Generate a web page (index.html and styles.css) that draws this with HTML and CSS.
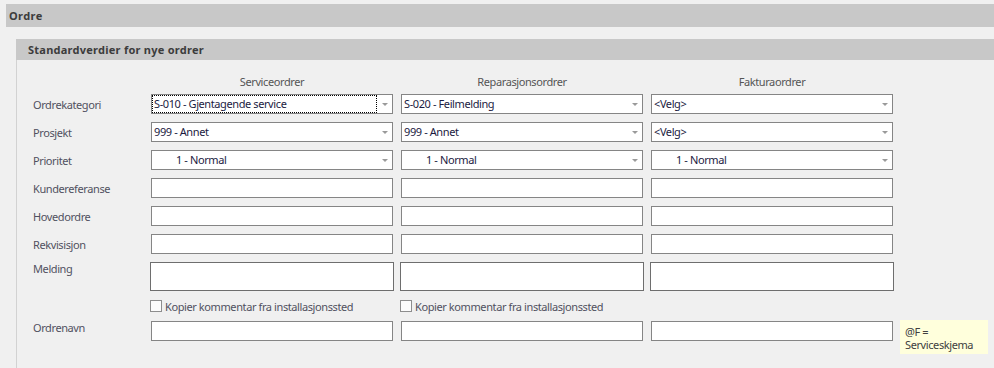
FILE: index.html
```html
<!DOCTYPE html>
<html lang="no">
<head>
    <meta charset="UTF-8">
    <title>Ordre</title>
    <link rel="stylesheet" href="styles.css">
</head>
<body>
    <div class="page-header">Ordre</div>

    <div class="section">
        <div class="section-header">Standardverdier for nye ordrer</div>

        <div class="form">
            <!-- column headings -->
            <div></div>
            <div class="col-heading">Serviceordrer</div>
            <div class="col-heading">Reparasjonsordrer</div>
            <div class="col-heading">Fakturaordrer</div>
            <div></div>

            <div class="label">Ordrekategori</div>
            <div class="combo"><span class="combo-value focused">S-010 - Gjentagende service</span><span class="combo-arrow"></span></div>
            <div class="combo"><span class="combo-value">S-020 - Feilmelding</span><span class="combo-arrow"></span></div>
            <div class="combo"><span class="combo-value">&lt;Velg&gt;</span><span class="combo-arrow"></span></div>
            <div></div>

            <div class="label">Prosjekt</div>
            <div class="combo"><span class="combo-value">999 - Annet</span><span class="combo-arrow"></span></div>
            <div class="combo"><span class="combo-value">999 - Annet</span><span class="combo-arrow"></span></div>
            <div class="combo"><span class="combo-value">&lt;Velg&gt;</span><span class="combo-arrow"></span></div>
            <div></div>

            <div class="label">Prioritet</div>
            <div class="combo"><span class="combo-value indent">1 - Normal</span><span class="combo-arrow"></span></div>
            <div class="combo"><span class="combo-value indent">1 - Normal</span><span class="combo-arrow"></span></div>
            <div class="combo"><span class="combo-value indent">1 - Normal</span><span class="combo-arrow"></span></div>
            <div></div>

            <div class="label">Kundereferanse</div>
            <div class="textbox"></div>
            <div class="textbox"></div>
            <div class="textbox"></div>
            <div></div>

            <div class="label">Hovedordre</div>
            <div class="textbox"></div>
            <div class="textbox"></div>
            <div class="textbox"></div>
            <div></div>

            <div class="label">Rekvisisjon</div>
            <div class="textbox"></div>
            <div class="textbox"></div>
            <div class="textbox"></div>
            <div></div>

            <div class="label top">Melding</div>
            <div class="memo"></div>
            <div class="memo"></div>
            <div class="memo"></div>
            <div></div>

            <div></div>
            <label class="check"><span class="check-box"></span>Kopier kommentar fra installasjonssted</label>
            <label class="check"><span class="check-box"></span>Kopier kommentar fra installasjonssted</label>
            <div></div>
            <div></div>

            <div class="label top">Ordrenavn</div>
            <div class="textbox"></div>
            <div class="textbox"></div>
            <div class="textbox"></div>
            <div class="hint">@F = Serviceskjema</div>
        </div>
    </div>
</body>
</html>
```

FILE: styles.css
```css
body {
    margin: 0;
    height: 368px;
    background: #f0f0f0;
    font-family: 'Noto Sans', 'DejaVu Sans', sans-serif;
    font-size: 11px;
    letter-spacing: -0.4px;
    color: #505060;
    overflow: hidden;
}
.page-header {
    margin: 4px 0 0 6px;
    height: 23px;
    line-height: 23px;
    padding-left: 3px;
    background: #c8c8c8;
    color: #3c3c3c;
    font-weight: bold;
    letter-spacing: 0.4px;
}
.section {
    margin: 12px 0 0 16px;
    border-left: 1px solid #d2d2d2;
    height: 340px;
}
.section-header {
    margin-left: -1px;
    height: 21px;
    line-height: 21px;
    padding-left: 12px;
    background: #c8c8c8;
    color: #3c3c3c;
    font-weight: bold;
    letter-spacing: 0.25px;
}
.form {
    display: grid;
    grid-template-columns: 110px 242px 242px 242px 87px;
    column-gap: 8px;
    row-gap: 8px;
    padding: 14px 0 0 16px;
}
.col-heading {
    height: 12px;
    line-height: 16px;
    text-align: center;
    color: #555;
}
.label {
    align-self: center;
}
.label.top {
    align-self: start;
    line-height: 14px;
}
.combo,
.textbox {
    box-sizing: border-box;
    height: 20px;
    background: #fff;
    border: 1px solid #858585;
}
.combo {
    display: flex;
    align-items: stretch;
    color: #1b1b3f;
}
.combo-value {
    flex: 1;
    padding-left: 2px;
    line-height: 18px;
    white-space: nowrap;
    overflow: hidden;
}
.combo-value.focused {
    border: 1px dotted #000;
    padding-left: 1px;
    line-height: 16px;
}
.combo-value.indent {
    padding-left: 24px;
}
.combo-arrow {
    width: 15px;
    display: flex;
    align-items: center;
    justify-content: center;
}
.combo-arrow::after {
    content: '';
    border-left: 3px solid transparent;
    border-right: 3px solid transparent;
    border-top: 3px solid #9a9a9a;
}
.memo {
    box-sizing: border-box;
    height: 29px;
    margin: 0 -1px;
    background: #fff;
    border: 1px solid #6e6e6e;
}
.check {
    display: flex;
    align-items: center;
    height: 14px;
    margin-left: -1px;
    gap: 3px;
    color: #505060;
}
.check-box {
    box-sizing: border-box;
    width: 12px;
    height: 12px;
    background: #fcfcfc;
    border: 1px solid #8e8e8e;
}
.hint {
    margin: -1px 0 0 -1px;
    height: 34px;
    box-sizing: border-box;
    padding: 5px 4px 0 5px;
    background: #ffffdc;
    color: #404040;
    line-height: 13px;
}
```
